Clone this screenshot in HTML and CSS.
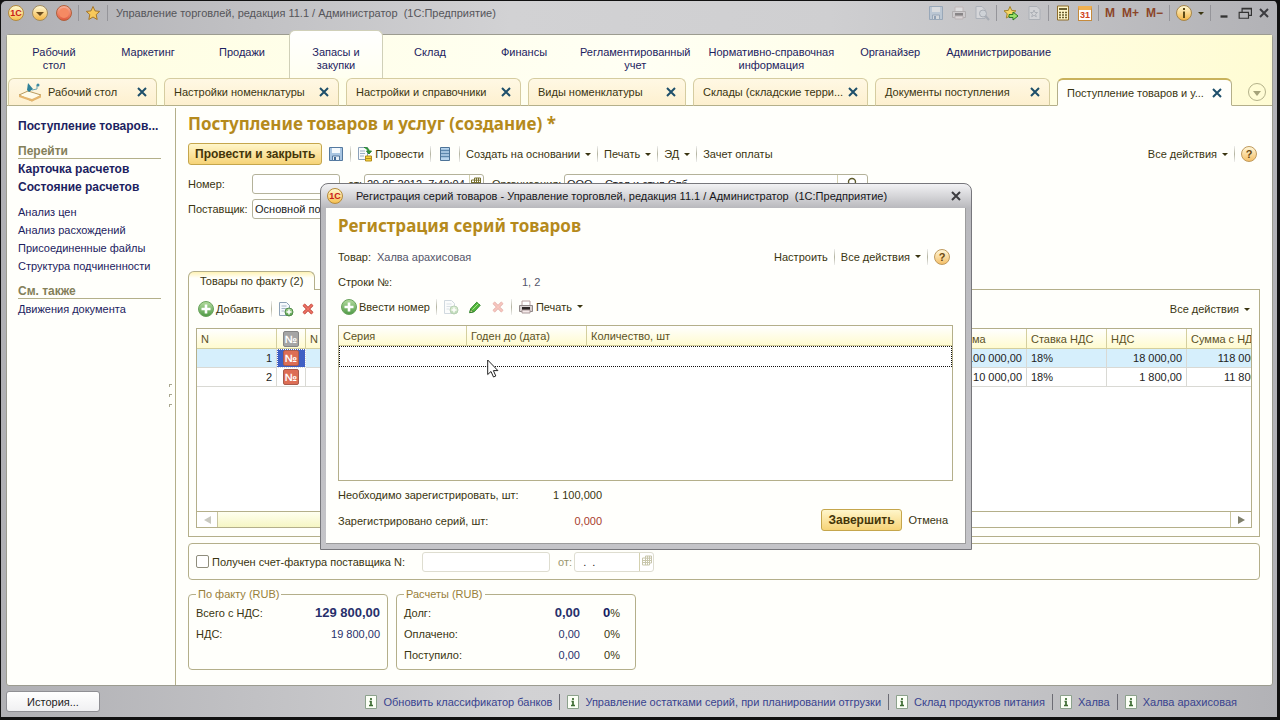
FILE: index.html
```html
<!DOCTYPE html>
<html lang="ru">
<head>
    <meta charset="UTF-8">
    <meta name="viewport" content="width=device-width, initial-scale=1.0">
    <title>Управление торговлей, редакция 11.1</title>
    <link rel="stylesheet" href="styles.css">
</head>
<body>
    <!-- Shared icons -->
    <svg class="defs" aria-hidden="true">
        <defs>
            <linearGradient id="gold" x1="0" y1="0" x2="0" y2="1"><stop offset="0" stop-color="#fffbd8"/><stop offset="1" stop-color="#f3b340"/></linearGradient>
            <linearGradient id="red" x1="0" y1="0" x2="0" y2="1"><stop offset="0" stop-color="#f9b49c"/><stop offset="1" stop-color="#e0573a"/></linearGradient>
            <linearGradient id="green" x1="0" y1="0" x2="0" y2="1"><stop offset="0" stop-color="#b5dca0"/><stop offset="1" stop-color="#4f9a45"/></linearGradient>
        </defs>
        <symbol id="down" viewBox="0 0 16 16"><circle cx="8" cy="8" r="7.5" fill="url(#gold)" stroke="#a08a60"/><path d="M4 7h8l-4 4z" fill="#6b4c1e"/></symbol>
        <symbol id="ball" viewBox="0 0 16 16"><circle cx="8" cy="8" r="7.5" fill="url(#red)" stroke="#b0603c"/><circle cx="8" cy="8" r="5" fill="#f58a63"/></symbol>
        <symbol id="star" viewBox="0 0 16 16"><path d="M8 1.5l2 4.4 4.7.5-3.5 3.2 1 4.9L8 12l-4.2 2.5 1-4.9L1.300 6.400l4.700-.5z" fill="#f8c95a" stroke="#a5762a"/></symbol>
        <symbol id="star-go" viewBox="0 0 16 16"><path d="M7 1.500l1.700 3.900 4.200.4-3.200 2.900.9 4.300L7 10.800 3.300 13l.9-4.300L1 5.800l4.300-.4z" fill="#f8d766" stroke="#a5852a"/><path d="M6 9.500h4V7l5 4-5 4v-2.500H6z" fill="#9be068" stroke="#2d7b23"/></symbol>
        <symbol id="disk" viewBox="0 0 16 16"><path d="M1.500 1.500h13v13h-13z" fill="#a9c6e2" stroke="#54799f"/><path d="M4 2h8v5H4z" fill="#f5fafd"/><path d="M4.500 10h7v4.500h-7z" fill="#e8f0f6" stroke="#54799f"/><path d="M6 11h2v3H6z" fill="#3d6692"/></symbol>
        <symbol id="printer" viewBox="0 0 16 16"><path d="M4 2h8v5H4z" fill="#fff" stroke="#b9a0a0"/><path d="M1.500 6.500h13v6h-13z" fill="#d9d2d2" stroke="#8f8787"/><path d="M4 8h8v3H4z" fill="#2c2525"/><path d="M4 11h8v3H4z" fill="#f6eaea" stroke="#a99"/></symbol>
        <symbol id="preview" viewBox="0 0 16 16"><path d="M2 1.500h6l3 3v9H2z" fill="#eef0f3" stroke="#8994a3"/><circle cx="9" cy="8.500" r="3.500" fill="#dce6ee" stroke="#7b8797"/><path d="M11.500 11l3.500 4" stroke="#7b8797" stroke-width="2"/></symbol>
        <symbol id="page-star" viewBox="0 0 16 16"><path d="M3 1.500h8l3 3v10H3z" fill="#eceef1" stroke="#8d96a2"/><path d="M8 5l1 2.500h2.500l-2 1.700.8 2.600L8 10.300l-2.300 1.500.8-2.600-2-1.700H7z" fill="none" stroke="#8d96a2"/></symbol>
        <symbol id="calc" viewBox="0 0 16 16"><path d="M2.500 1h11v14h-11z" fill="#fff6c8" stroke="#8d6d2b"/><path d="M4 4h8" stroke="#6b6030" stroke-width="2"/><path d="M4 7.500h8M4 10h8M4 12.500h8" stroke="#6b6030" stroke-width="1.500" stroke-dasharray="2 1"/></symbol>
        <symbol id="info-ball" viewBox="0 0 16 16"><circle cx="8" cy="8" r="7.500" fill="url(#gold)" stroke="#a5854a"/><path d="M8 3v2M8 6.500V13" stroke="#5c4a16" stroke-width="2"/></symbol>
        <symbol id="desk" viewBox="0 0 24 20"><path d="M1 13l9-4 13 4-9 6z" fill="#fffbe9" stroke="#b99a5f"/><path d="M1 13l13 4 9-4v2.500l-9 4L1 15z" fill="#e5b66e"/><path d="M10 1l5 6-4 3-2-2z" fill="#2f8199"/><path d="M14 8l5-1V3" fill="none" stroke="#6ca7b5"/><circle cx="20" cy="3" r="1.500" fill="#3d8ba2"/></symbol>
        <symbol id="post" viewBox="0 0 16 16"><path d="M1.500 1.500h9v12h-9z" fill="#f8fafc" stroke="#8ba0b8"/><path d="M3 5h5M3 7.500h5M3 10h4" stroke="#9ab0c6"/><path d="M7 1.500c4 0 5 1 5 4M9.500 5l2.500 3 2.500-3z" fill="#31a03a" stroke="#267f2d"/><path d="M8.500 10h6v5h-6z" fill="#f5d33b" stroke="#b58d1a"/><path d="M8.500 12.500h6" stroke="#b58d1a"/></symbol>
        <symbol id="register" viewBox="0 0 16 16"><path d="M3.500 1.500h9v13h-9z" fill="#b8d5ee" stroke="#4d7397"/><path d="M4 4.500h8M4 7.500h8M4 10.500h8" stroke="#5c87ad" stroke-width="1.500"/></symbol>
        <symbol id="plus" viewBox="0 0 16 16"><circle cx="8" cy="8" r="7.500" fill="url(#green)" stroke="#6ba35e"/><path d="M8 3.500v9M3.500 8h9" stroke="#fff" stroke-width="2.600"/></symbol>
        <symbol id="copy" viewBox="0 0 16 16"><path d="M1.500 1.500h7l3 3v10h-10z" fill="#f6f9fc" stroke="#8ea2b6"/><path d="M3.500 5h5M3.500 7.500h5M3.500 10h3" stroke="#a5b6c6"/><circle cx="11" cy="11" r="4" fill="url(#green)" stroke="#518d4a"/><path d="M11 8.500v5M8.500 11h5" stroke="#fff" stroke-width="1.500"/></symbol>
        <symbol id="delete" viewBox="0 0 16 16"><path d="M3 3l10 10M13 3L3 13" stroke="#b7382d" stroke-width="3.500"/><path d="M3 3l10 10M13 3L3 13" stroke="#ee7566" stroke-width="2"/></symbol>
        <symbol id="pencil" viewBox="0 0 16 16"><path d="M3 10l7-7.500 4 3.500-7 7.500-5 1z" fill="#52b73b" stroke="#257d20"/><path d="M5 11l7-7" stroke="#b5ee98"/><path d="M2 14.500l1-4 3 3z" fill="#f2dfb4" stroke="#257d20"/></symbol>
        <symbol id="grid" viewBox="0 0 10 11"><path d="M3.500 1h6v7h-2v2h-7V3h3zM.5 5.500h9M.5 7.500h7M3.500 3v7M5.500 1v9M7.500 1v7M3.500 3.200h6" fill="none" stroke="#77702e"/></symbol>
        <symbol id="lens" viewBox="0 0 12 12"><circle cx="6" cy="5" r="3.500" fill="none" stroke="#5d5a2b" stroke-width="1.400"/><path d="M3.500 8L1 11" stroke="#5d5a2b" stroke-width="1.500"/></symbol>
        <symbol id="cross" viewBox="0 0 10 10"><path d="M1 1l8 8M9 1L1 9" stroke="currentColor" stroke-width="2"/></symbol>
        <symbol id="note" viewBox="0 0 12 14"><path d="M.5.5h11v13H.5z" fill="#fbfff6" stroke="#8da28d"/><path d="M6 3v2M4.500 6.500H6v4M4 10.500h4" fill="none" stroke="#3c6b32" stroke-width="1.700"/></symbol>
    </svg>

    <div class="window">
        <header class="titlebar">
            <button class="icon-btn" aria-label="Главное меню"><span class="logo">1С</span></button>
            <button class="icon-btn" aria-label="Меню"><svg class="icon"><use href="#down"/></svg></button>
            <button class="icon-btn" aria-label="Избранное"><svg class="icon"><use href="#ball"/></svg></button>
            <span class="bar-sep"></span>
            <button class="icon-btn" aria-label="Добавить в избранное"><svg class="icon"><use href="#star"/></svg></button>
            <span class="bar-sep"></span>
            <span class="window-title">Управление торговлей, редакция 11.1 / Администратор&nbsp; (1С:Предприятие)</span>
            <div class="window-tools">
                <button class="icon-btn" aria-label="Сохранить" disabled><svg class="icon"><use href="#disk"/></svg></button>
                <button class="icon-btn" aria-label="Печать" disabled><svg class="icon"><use href="#printer"/></svg></button>
                <button class="icon-btn" aria-label="Просмотр" disabled><svg class="icon"><use href="#preview"/></svg></button>
                <span class="bar-sep"></span>
                <button class="icon-btn" aria-label="Перейти"><svg class="icon"><use href="#star-go"/></svg></button>
                <button class="icon-btn" aria-label="Ссылка" disabled><svg class="icon"><use href="#page-star"/></svg></button>
                <span class="bar-sep"></span>
                <button class="icon-btn" aria-label="Калькулятор"><svg class="icon"><use href="#calc"/></svg></button>
                <button class="icon-btn" aria-label="Календарь"><span class="calendar">31</span></button>
                <span class="bar-sep"></span>
                <button class="memory">M</button>
                <button class="memory">M+</button>
                <button class="memory">M−</button>
                <span class="bar-sep"></span>
                <button class="icon-btn" aria-label="Справка"><svg class="icon"><use href="#info-ball"/></svg><span class="arrow"></span></button>
                <span class="bar-sep"></span>
                <button class="win-btn" aria-label="Свернуть"><svg class="win-icon" viewBox="0 0 12 12"><path d="M3 9h6" stroke="#333" stroke-width="2"/></svg></button>
                <button class="win-btn" aria-label="Восстановить"><svg class="win-icon" viewBox="0 0 12 12"><path d="M3.500 5V2.500h8V8H9M1 5.500h8v5H1zM3 2h9" fill="none" stroke="#333" stroke-width="1"/></svg></button>
                <button class="win-btn" aria-label="Закрыть"><svg class="cross"><use href="#cross"/></svg></button>
            </div>
        </header>

        <div class="workspace">
            <nav class="sections">
                <a href="#">Рабочий<br>стол</a>
                <a href="#">Маркетинг</a>
                <a href="#">Продажи</a>
                <a href="#" class="current">Запасы и<br>закупки</a>
                <a href="#">Склад</a>
                <a href="#">Финансы</a>
                <a href="#">Регламентированный<br>учет</a>
                <a href="#">Нормативно-справочная<br>информация</a>
                <a href="#">Органайзер</a>
                <a href="#">Администрирование</a>
            </nav>

            <nav class="tabs">
                <div class="tab tab-home"><svg class="desk"><use href="#desk"/></svg><a href="#">Рабочий стол</a><button aria-label="Закрыть"><svg class="cross"><use href="#cross"/></svg></button></div>
                <div class="tab"><a href="#">Настройки номенклатуры</a><button aria-label="Закрыть"><svg class="cross"><use href="#cross"/></svg></button></div>
                <div class="tab"><a href="#">Настройки и справочники</a><button aria-label="Закрыть"><svg class="cross"><use href="#cross"/></svg></button></div>
                <div class="tab tab-short"><a href="#">Виды номенклатуры</a><button aria-label="Закрыть"><svg class="cross"><use href="#cross"/></svg></button></div>
                <div class="tab"><a href="#">Склады (складские терри...</a><button aria-label="Закрыть"><svg class="cross"><use href="#cross"/></svg></button></div>
                <div class="tab"><a href="#">Документы поступления</a><button aria-label="Закрыть"><svg class="cross"><use href="#cross"/></svg></button></div>
                <div class="tab active"><a href="#">Поступление товаров и у...</a><button aria-label="Закрыть"><svg class="cross"><use href="#cross"/></svg></button></div>
                <button class="tabs-more" aria-label="Все вкладки"><span class="arrow"></span></button>
            </nav>

            <div class="page">
                <aside class="sidebar">
                    <a href="#" class="strong">Поступление товаров...</a>
                    <h2>Перейти</h2>
                    <a href="#" class="strong">Карточка расчетов</a>
                    <a href="#" class="strong">Состояние расчетов</a>
                    <div class="links">
                        <a href="#">Анализ цен</a>
                        <a href="#">Анализ расхождений</a>
                        <a href="#">Присоединенные файлы</a>
                        <a href="#">Структура подчиненности</a>
                    </div>
                    <h2>См. также</h2>
                    <a href="#">Движения документа</a>
                    <span class="grip"><i></i><i></i><i></i></span>
                </aside>

                <main class="form">
                    <h1>Поступление товаров и услуг (создание) *</h1>
                    <div class="toolbar">
                        <button class="primary">Провести и закрыть</button>
                        <button class="tool save" aria-label="Записать"><svg class="icon"><use href="#disk"/></svg></button>
                        <span class="sep"></span>
                        <button class="tool"><svg class="icon"><use href="#post"/></svg>Провести</button>
                        <span class="sep"></span>
                        <button class="tool" aria-label="Движения"><svg class="icon"><use href="#register"/></svg></button>
                        <span class="sep"></span>
                        <button class="tool">Создать на основании<span class="arrow"></span></button>
                        <span class="sep"></span>
                        <button class="tool">Печать<span class="arrow"></span></button>
                        <span class="sep"></span>
                        <button class="tool">ЭД<span class="arrow"></span></button>
                        <span class="sep"></span>
                        <button class="tool">Зачет оплаты</button>
                        <button class="tool push">Все действия<span class="arrow"></span></button>
                        <span class="sep"></span>
                        <button class="help" aria-label="Справка">?</button>
                    </div>

                    <div class="row">
                        <label class="caption" for="number">Номер:</label>
                        <input class="field number" id="number" type="text">
                        <label class="from" for="date">от:</label>
                        <span class="combo date"><input id="date" type="text" value="29.05.2012&nbsp; 7:49:04"><button aria-label="Выбрать дату"><svg class="grid"><use href="#grid"/></svg></button></span>
                        <label class="org-label" for="org">Организация:</label>
                        <span class="combo org"><input id="org" type="text" value="ООО _ Стол и стул Спб"><button aria-label="Открыть"><svg class="lens"><use href="#lens"/></svg></button></span>
                    </div>
                    <div class="row">
                        <label class="caption" for="supplier">Поставщик:</label>
                        <input class="field supplier" id="supplier" type="text" value="Основной поставщик">
                    </div>

                    <section class="goods">
                        <div class="goods-tabs"><button class="goods-tab">Товары по факту (2)</button></div>
                        <div class="goods-body">
                            <div class="toolbar">
                                <button class="tool"><svg class="icon"><use href="#plus"/></svg>Добавить</button>
                                <span class="sep"></span>
                                <button class="tool" aria-label="Скопировать"><svg class="icon"><use href="#copy"/></svg></button>
                                <button class="tool" aria-label="Удалить"><svg class="icon-small"><use href="#delete"/></svg></button>
                                <button class="tool push">Все действия<span class="arrow"></span></button>
                            </div>
                            <div class="goods-list">
                                <div class="goods-scroll">
                                    <table class="grid-table">
                                        <colgroup><col class="c-n"><col class="c-icon"><col><col class="c-sum"><col class="c-sum"><col class="c-sum"><col class="c-total"></colgroup>
                                        <thead>
                                            <tr><th>N</th><th class="mark"><span class="badge gray">№</span></th><th>N</th><th>Сумма</th><th>Ставка НДС</th><th>НДС</th><th>Сумма с НДС</th></tr>
                                        </thead>
                                        <tbody>
                                            <tr class="selected"><td class="num">1</td><td class="mark focus"><span class="badge">№</span></td><td></td><td class="num">100 000,00</td><td>18%</td><td class="num">18 000,00</td><td class="num">118 000,00</td></tr>
                                            <tr><td class="num">2</td><td class="mark"><span class="badge">№</span></td><td></td><td class="num">10 000,00</td><td>18%</td><td class="num">1 800,00</td><td class="num">11 800,00</td></tr>
                                        </tbody>
                                    </table>
                                </div>
                                <div class="scrollbar">
                                    <button class="left" aria-label="Влево"></button>
                                    <span class="thumb"></span>
                                    <button class="right" aria-label="Вправо"></button>
                                </div>
                            </div>
                        </div>
                    </section>

                    <div class="invoice">
                        <input type="checkbox" id="invoice">
                        <label for="invoice">Получен счет-фактура поставщика N:</label>
                        <input class="field invoice-number" type="text" aria-label="Номер счета-фактуры" disabled>
                        <label class="muted" for="invoice-date">от:</label>
                        <span class="combo invoice-date"><input id="invoice-date" type="text" value="&nbsp; .&nbsp; ." disabled><button aria-label="Выбрать дату" disabled><svg class="grid"><use href="#grid"/></svg></button></span>
                    </div>

                    <div class="totals">
                        <fieldset class="fact">
                            <legend>По факту (RUB)</legend>
                            <div class="total"><span>Всего с НДС:</span><b class="value">129 800,00</b></div>
                            <div class="total"><span>НДС:</span><span class="value">19 800,00</span></div>
                        </fieldset>
                        <fieldset class="payments">
                            <legend>Расчеты (RUB)</legend>
                            <div class="total"><span>Долг:</span><b class="value">0,00</b><span class="percent"><b>0</b>%</span></div>
                            <div class="total"><span>Оплачено:</span><span class="value">0,00</span><span class="percent">0%</span></div>
                            <div class="total"><span>Поступило:</span><span class="value">0,00</span><span class="percent">0%</span></div>
                        </fieldset>
                    </div>
                </main>
            </div>
        </div>

        <footer class="statusbar">
            <button class="history">История...</button>
            <nav class="recent">
                <a href="#"><svg class="note"><use href="#note"/></svg>Обновить классификатор банков</a>
                <a href="#"><svg class="note"><use href="#note"/></svg>Управление остатками серий, при планировании отгрузки</a>
                <a href="#"><svg class="note"><use href="#note"/></svg>Склад продуктов питания</a>
                <a href="#"><svg class="note"><use href="#note"/></svg>Халва</a>
                <a href="#"><svg class="note"><use href="#note"/></svg>Халва арахисовая</a>
            </nav>
        </footer>
    </div>

    <div class="dialog" role="dialog" aria-labelledby="dialog-title">
        <div class="dialog-bar">
            <span class="logo">1С</span>
            <span>Регистрация серий товаров - Управление торговлей, редакция 11.1 / Администратор&nbsp; (1С:Предприятие)</span>
            <button class="win-btn" aria-label="Закрыть"><svg class="cross"><use href="#cross"/></svg></button>
        </div>
        <div class="dialog-body">
            <h1 id="dialog-title">Регистрация серий товаров</h1>
            <div class="dialog-line">
                <span class="key">Товар:</span><span class="product">Халва арахисовая</span>
                <button class="tool push">Настроить</button>
                <span class="sep"></span>
                <button class="tool">Все действия<span class="arrow"></span></button>
                <span class="sep"></span>
                <button class="help" aria-label="Справка">?</button>
            </div>
            <div class="dialog-line"><span class="rows-key">Строки №:</span><span class="product">1, 2</span></div>
            <div class="toolbar">
                <button class="tool"><svg class="icon"><use href="#plus"/></svg>Ввести номер</button>
                <span class="sep"></span>
                <button class="tool copy" aria-label="Скопировать" disabled><svg class="icon"><use href="#copy"/></svg></button>
                <button class="tool" aria-label="Изменить"><svg class="icon-small"><use href="#pencil"/></svg></button>
                <button class="tool" aria-label="Удалить" disabled><svg class="icon-small"><use href="#delete"/></svg></button>
                <span class="sep"></span>
                <button class="tool"><svg class="icon"><use href="#printer"/></svg>Печать<span class="arrow"></span></button>
            </div>
            <div class="series">
                <table class="grid-table">
                    <colgroup><col class="c-series"><col class="c-date"><col></colgroup>
                    <thead><tr><th>Серия</th><th>Годен до (дата)</th><th>Количество, шт</th></tr></thead>
                    <tbody><tr class="empty"><td colspan="3"></td></tr></tbody>
                </table>
            </div>
            <div class="dialog-foot">
                <div class="counts">
                    <span>Необходимо зарегистрировать, шт:</span><span class="count">1 100,000</span>
                    <span>Зарегистрировано серий, шт:</span><span class="count bad">0,000</span>
                </div>
                <div class="dialog-actions">
                    <button class="primary">Завершить</button>
                    <button class="tool">Отмена</button>
                </div>
            </div>
        </div>
        <svg class="cursor" viewBox="0 0 12 19"><path d="M.7 1v14.500l3.300-3 2.500 5.500 2.300-1-2.400-5.400h4.500z" fill="#fff" stroke="#222"/></svg>
    </div>
</body>
</html>
```
FILE: styles.css
```css
* { box-sizing: border-box; }
body { margin: 0; background: #111; color: #3a3510; font: 11px/14px "Liberation Sans", Arial, sans-serif; }
a { color: #1c2260; text-decoration: none; }
button, input { font: inherit; color: inherit; margin: 0; }
button { padding: 0; border: 0; background: none; white-space: nowrap; }
h1 { margin: 0; color: #b58a1c; font: bold 17px/22px "Noto Sans", sans-serif; }
.defs { position: absolute; width: 0; height: 0; }
.icon { width: 16px; height: 16px; flex: none; }
.icon-small { width: 14px; height: 14px; flex: none; }
.cross { width: 10px; height: 10px; display: block; }
.arrow { display: inline-block; border: 3px solid transparent; border-top-color: currentColor; border-bottom: 0; }
button:disabled svg { opacity: .4; }
.logo { width: 16px; height: 16px; flex: none; border: 1px solid #b58a3c; border-radius: 50%; background: linear-gradient(#fffbd0, #f6c050); color: #c8201a; font-weight: bold; font-size: 9px; line-height: 14px; text-align: center; }
.calendar { width: 14px; height: 15px; border: 1px solid #c58a3c; border-top: 4px solid #f0b050; background: #fff; color: #d0451b; font-weight: bold; font-size: 9px; line-height: 11px; text-align: center; }
.badge { display: block; width: 16px; height: 16px; margin: auto; border: 1px solid #a85b4c; border-radius: 2px; background: #dd6d55; color: #fff; font-weight: bold; font-size: 11px; line-height: 14px; text-align: center; }
.badge.gray { border-color: #858585; background: #a5a5a5; }

/* Window frame */
.window { display: flex; flex-direction: column; min-height: 100vh; padding: 0 4px 0 5px; border: solid #111; border-width: 1px 3px 3px 1px; border-radius: 6px 6px 0 0; background: linear-gradient(90deg, #b0b0b4, #d2d2d4 40%, #cfcfd1 65%, #b2b2b6); }
.titlebar { display: flex; align-items: center; height: 33px; padding: 0 4px 9px 2px; gap: 8px; }
.icon-btn { display: flex; align-items: center; gap: 6px; }
.bar-sep { width: 1px; height: 16px; margin: 0 -1px; background: #95959a; }
.titlebar > .bar-sep { margin: 0 -2px; }
.window-title { margin-left: 2px; color: #55555a; white-space: nowrap; }
.window-tools { display: flex; align-items: center; gap: 7px; margin-left: auto; }
.memory { color: #8b4528; font: bold 12px/14px "Liberation Sans", Arial, sans-serif; }
.win-btn { color: #3c3c40; }
.win-icon { width: 14px; height: 14px; display: block; }
.workspace { display: flex; flex: 1; flex-direction: column; border: 1px solid #9c9c90; border-radius: 3px; background: #fffffb; }

/* Sections and open tabs */
.sections { display: flex; height: 43px; background: linear-gradient(90deg, #fffee0, #fffff4 50%, #fffcd4); }
.sections a { min-width: 94px; padding: 11px 9px 0; text-align: center; line-height: 13px; }
.sections .current { margin-top: -5px; padding-top: 15px; border: 1px solid #d0d0b8; border-width: 1px 1px 0; border-radius: 6px 6px 0 0; background: linear-gradient(#fff, #fffff0); }
.tabs { display: flex; gap: 7px; height: 28px; padding-left: 1px; border-bottom: 1px solid #b4af8a; background: linear-gradient(90deg, #fffee0, #fffff4 50%, #fffcd4); }
.tab { display: flex; align-items: center; flex: 0 1 175px; min-width: 0; height: 28px; padding: 0 9px; border: 1px solid #d5cca0; border-bottom-color: #b4af8a; border-radius: 6px 6px 0 0; background: linear-gradient(#fff8e4, #fdf0cf); }
.tab a { color: #3a3510; white-space: nowrap; }
.tab button { margin-left: auto; color: #1e4f6b; }
.tab-home { flex-basis: 149px; gap: 6px; }
.tab-short { flex-basis: 158px; }
.tab.active { border-color: #c9b25c #b4af8a #fffffb; border-top-width: 2px; background: #fffffb; }
.desk { width: 24px; height: 20px; flex: none; }
.tabs-more { width: 18px; height: 18px; margin: 5px 6px 0 auto; border: 1px solid #b4b28a; border-radius: 50%; color: #a5a37a; line-height: 10px; }
.tabs-more .arrow { border-width: 5px 4px 0; }

/* Left navigation */
.page { display: flex; flex: 1; }
.sidebar { position: relative; display: flex; flex-direction: column; flex: 0 0 169px; margin-top: 2px; padding: 9px 14px 0 11px; border-right: 1px solid #b4af8a; line-height: 18px; }
.sidebar a { white-space: nowrap; }
.sidebar .strong { font-weight: bold; font-size: 12px; }
.sidebar h2 { margin: 9px 0 1px; border-bottom: 1px solid #b4b08a; color: #84805a; font-size: 12px; line-height: 14px; }
.links { display: flex; flex-direction: column; margin-top: 7px; }
.grip { position: absolute; right: 3px; top: 276px; display: grid; gap: 7px; }
.grip i { width: 3px; height: 3px; border: solid #aaa890; border-width: 1px 0 0 1px; }

/* Document form */
.form { flex: 1; min-width: 0; padding: 7px 12px 15px 12px; }
.toolbar { display: flex; align-items: center; }
.form > .toolbar { height: 22px; margin: 8px 0 9px; }
.tool { display: flex; align-items: center; gap: 2px; }
.tool .arrow { margin-left: 3px; }
.sep { width: 1px; height: 16px; margin: 0 6px; background: linear-gradient(#eee, #b4b4a0, #eee); }
.save { margin-left: 6px; }
.push { margin-left: auto; }
.help { width: 16px; height: 16px; margin: 0 3px 0 0; border: 1px solid #c09a5c; border-radius: 50%; background: linear-gradient(#fff6d8, #f5c068); color: #69480f; font-weight: bold; font-size: 11px; line-height: 14px; text-align: center; }
.primary { height: 22px; padding: 0 6px; border: 1px solid #c5a64c; border-radius: 3px; background: linear-gradient(#fff6ca, #f6d377); color: #443508; font-weight: bold; font-size: 12px; }
.row { display: flex; align-items: center; height: 20px; margin-bottom: 5px; }
.caption { width: 64px; }
.field, .combo { height: 20px; border: 1px solid #b4b29a; border-radius: 3px; background: #fff; }
.field { padding: 0 2px; color: #222; }
.combo { display: flex; overflow: hidden; }
.combo input { flex: 1; min-width: 0; padding: 0 2px; border: 0; background: none; color: #222; }
.combo button { width: 14px; border-left: 1px solid #d4d1b0; }
.grid { width: 10px; height: 11px; }
.lens { width: 12px; height: 12px; }
.number { width: 88px; }
.from { margin: 0 2px 0 8px; }
.date { width: 120px; }
.org-label { margin-left: 8px; width: 72px; }
.org { width: 304px; }
.org button { width: 30px; }
.supplier { width: 300px; }

.goods { margin-top: 52px; }
.goods-tabs { display: flex; align-items: flex-end; height: 19px; }
.goods-tabs::after { content: ""; flex: 1; border-bottom: 1px solid #b4af8a; }
.goods-tab { height: 19px; padding: 0 11px; border: 1px solid #b4af8a; border-bottom: 0; border-radius: 6px 6px 0 0; background: linear-gradient(#fff3b5, #fffffb 6px); }
.goods-body { padding: 8px 7px; border: 1px solid #b4af8a; border-top: 0; }
.goods-body .toolbar { height: 22px; margin: 0 2px 8px; }
.goods-body .tool + .tool { margin-left: 7px; }
.goods-body .tool.push { margin-left: auto; }
.goods-list { border: 1px solid #b4af8a; background: #fff; }
.goods-scroll { height: 182px; overflow: hidden; }
.grid-table { width: 100%; table-layout: fixed; border-collapse: separate; border-spacing: 0; }
.goods-scroll .grid-table { width: calc(100% + 26px); }
.grid-table th { height: 20px; padding: 0 4px; border: solid #d4cf9e; border-width: 0 1px 1px 0; background: linear-gradient(#fff, #fffbd0); color: #5c5224; font-weight: normal; text-align: left; white-space: nowrap; overflow: hidden; }
.grid-table td { height: 19px; padding: 0 4px; border: solid #d9d9d4; border-width: 0 1px 1px 0; color: #222; line-height: 14px; white-space: nowrap; }
.grid-table .num { text-align: right; }
.grid-table .mark { padding: 0; text-align: center; }
.selected td { background: #d6effc; }
.selected .focus { background: #3f5fc4; outline: 1px dotted #fff; outline-offset: -1px; }
.c-n { width: 80px; }
.c-icon { width: 29px; }
.c-sum { width: 80px; }
.c-total { width: 90px; }
.scrollbar { display: flex; height: 16px; border-top: 1px solid #b4af8a; }
.scrollbar button { width: 21px; display: flex; align-items: center; justify-content: center; }
.scrollbar button::before { content: ""; border: 4px solid transparent; }
.scrollbar .left { border-right: 1px solid #c9c5a0; }
.scrollbar .left::before { border-right: 7px solid #c9c9c0; border-left: 0; }
.scrollbar .right { margin-left: auto; border-left: 1px solid #c9c5a0; }
.scrollbar .right::before { border-left: 7px solid #80806c; border-right: 0; }
.thumb { flex: 0 1 480px; border-right: 1px solid #c9c5a0; background: linear-gradient(#fffff0, #f6f6c4); }

.invoice { display: flex; align-items: center; height: 37px; margin-top: 6px; padding: 0 7px; border: 1px solid #b4af8a; border-radius: 4px; }
.invoice input[type="checkbox"] { appearance: none; width: 13px; height: 13px; margin: 0 3px 0 0; border: 1px solid #8f8d7c; border-radius: 2px; background: #fff; }
.invoice .field, .invoice .combo { border-color: #deddd0; }
.invoice-number { width: 128px; margin-left: 17px; }
.muted { margin: 0 2px 0 8px; color: #9a966c; }
.invoice-date { width: 80px; }

.totals { display: flex; gap: 8px; margin-top: 8px; }
.totals fieldset { height: 82px; margin: 0; padding: 6px 7px; border: 1px solid #b4af8a; border-radius: 4px; }
.totals legend { padding: 0 2px; color: #98803a; line-height: 12px; }
.fact { width: 200px; }
.payments { width: 240px; }
.total { display: flex; height: 21px; }
.value { margin-left: auto; color: #28306b; }
b { color: #141c62; font-size: 13px; }
.percent { width: 40px; text-align: right; }
.payments .total { padding-right: 8px; }

/* Bottom bar */
.statusbar { display: flex; align-items: center; height: 31px; padding-right: 36px; }
.history { width: 94px; height: 21px; border: 1px solid #8f8f94; border-radius: 3px; background: linear-gradient(#fff, #f0f0f2); color: #222; }
.recent { display: flex; margin-left: auto; }
.recent a { display: flex; align-items: center; gap: 6px; height: 16px; padding: 0 7px; border-right: 1px solid #6c6c74; color: #38438f; white-space: nowrap; }
.recent a:last-child { padding-right: 0; border-right: 0; }
.note { width: 12px; height: 14px; flex: none; }

/* Series registration dialog */
.dialog { position: absolute; left: 25%; top: 183px; width: 652px; padding: 0 5px 5px; border: 1px solid #77777c; border-radius: 8px 8px 0 0; background: linear-gradient(#f2f2f4, #b9b9bd 24px, #c4c4c8); }
.dialog-bar { display: flex; align-items: center; height: 24px; padding: 0 5px 0 1px; gap: 13px; color: #16161a; white-space: nowrap; }
.dialog-bar .win-btn { margin-left: auto; }
.dialog-body { padding: 7px 12px 12px; border: solid #9c9c9c; border-width: 0 1px 1px 0; background: #fffffc; }
.dialog-line { display: flex; align-items: center; height: 25px; }
.dialog-body h1 { margin-bottom: 7px; }
.key { width: 39px; }
.product { color: #55566b; }
.rows-key { width: 184px; }
.dialog-body .toolbar { height: 25px; padding-left: 3px; }
.dialog-body .tool + .tool { margin-left: 9px; }
.series { height: 156px; margin-top: 6px; border: 1px solid #b4af8a; background: #fff; }
.c-series { width: 128px; }
.c-date { width: 120px; }
.series .grid-table th:last-child { border-right: 0; }
.series .grid-table .empty td { height: 21px; border: 1px dotted #111; }
.dialog-foot { display: flex; justify-content: space-between; align-items: flex-start; }
.counts { display: grid; grid-template-columns: 188px 76px; row-gap: 12px; margin-top: 7px; white-space: nowrap; }
.count { text-align: right; }
.bad { color: #a83c2c; }
.dialog-actions { display: flex; align-items: center; gap: 7px; margin-top: 28px; padding-right: 5px; }
.dialog-body .dialog-actions .tool { margin: 0; }
.cursor { position: absolute; left: 166px; top: 175px; width: 12px; height: 19px; }
```
